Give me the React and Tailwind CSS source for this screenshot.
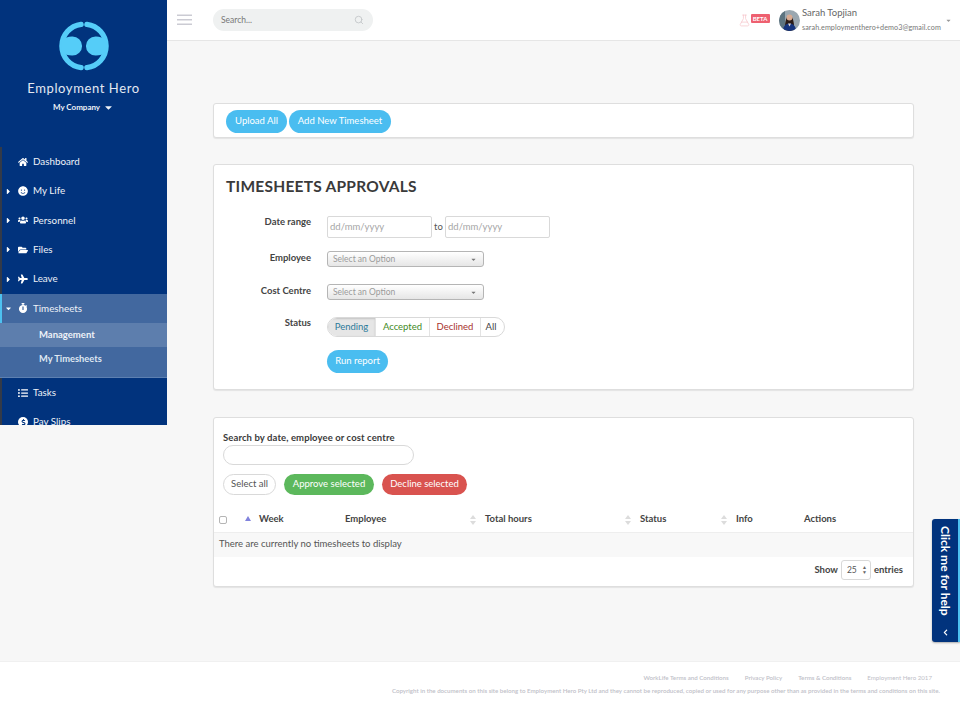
import { FaHome, FaSmile, FaUsers, FaFolderOpen, FaPlane, FaStopwatch, FaListUl, FaDollarSign, FaCaretRight, FaCaretDown, FaChevronLeft } from 'react-icons/fa'
import { Search, FlaskConical } from 'lucide-react'

function PayIcon() {
  return (
    <span className="w-[10px] h-[10px] rounded-full bg-white text-[#01337d] flex items-center justify-center text-[7px]"><FaDollarSign /></span>
  )
}

const NAV_TOP = [
  { label: 'Dashboard', icon: FaHome },
  { label: 'My Life', icon: FaSmile, arrow: true },
  { label: 'Personnel', icon: FaUsers, arrow: true },
  { label: 'Files', icon: FaFolderOpen, arrow: true },
  { label: 'Leave', icon: FaPlane, arrow: true },
]

function NavRow({ label, icon: Icon, arrow }) {
  return (
    <div className="h-[29.4px] flex items-center border-l-2 border-[#333a48] text-white">
      <span className="w-[5px] ml-[3.5px] flex justify-center text-[9px]">
        {arrow && <FaCaretRight />}
      </span>
      <span className="w-[13px] ml-[6px] flex justify-center text-[10px]"><Icon /></span>
      <span className="ml-[3.5px] mb-[1px] text-[9.8px] text-[#eef2f8]">{label}</span>
    </div>
  )
}

function Logo() {
  return (
    <svg width="50" height="50" viewBox="0 0 52 52" fill="none" className="text-[#55cdf8]">
      <path d="M23 3.5C11.5 5 3 14.5 3 26S11.5 47 23 48.5" stroke="currentColor" strokeWidth="5.5" strokeLinecap="round" />
      <path d="M29 3.5C40.5 5 49 14.5 49 26S40.5 47 29 48.5" stroke="currentColor" strokeWidth="5.5" strokeLinecap="round" />
      <path d="M3 20a16 16 0 0 1 11-4a10 10 0 1 1 0 20a16 16 0 0 1 -11-4z" fill="currentColor" />
      <path d="M49 20a16 16 0 0 0 -11-4a10 10 0 1 0 0 20a16 16 0 0 0 11-4z" fill="currentColor" />
    </svg>
  )
}

function Sidebar() {
  return (
    <aside className="w-[167px] h-[425px] shrink-0 bg-[#01337d] overflow-hidden">
      <div className="h-[147px] flex flex-col items-center pt-[21px]">
        <Logo />
        <div className="mt-[9px] text-[13px] leading-[16px] tracking-[0.6px] text-[#e3e9f2]">Employment Hero</div>
        <div className="mt-[5px] flex items-center gap-[3px] text-[8px] leading-[12px] font-bold text-[#eef2f8]">
          My Company <FaCaretDown className="text-[11px]" />
        </div>
      </div>
      {NAV_TOP.map(n => <NavRow key={n.label} {...n} />)}
      <div className="bg-[#42689f] border-b border-[#5d80b1]">
        <div className="h-[29px] flex items-center border-l-2 border-[#4dc1f0] text-white">
          <span className="w-[5px] ml-[3.5px] flex justify-center text-[9px]"><FaCaretDown /></span>
          <span className="w-[13px] ml-[6px] flex justify-center text-[10px]"><FaStopwatch /></span>
          <span className="ml-[3.5px] mb-[1px] text-[9.8px] text-[#eef2f8]">Timesheets</span>
        </div>
        <div className="h-[24px] flex items-center pl-[39px] bg-[#5d7ead] text-[9.5px] font-bold text-[#eef2f8]">Management</div>
        <div className="h-[30px] pt-[3px] pl-[39px] text-[9.3px] leading-[18px] font-bold text-[#dfe7f2]">My Timesheets</div>
      </div>
      <NavRow label="Tasks" icon={FaListUl} />
      <NavRow label="Pay Slips" icon={PayIcon} />
    </aside>
  )
}

function Avatar() {
  return (
    <svg width="21" height="21" viewBox="0 0 21 21" className="rounded-full shrink-0">
      <rect width="21" height="21" fill="#9aa7b0" />
      <rect width="6" height="21" fill="#5d7480" />
      <path d="M6 21c-.5-7 1-16 4.5-16S15.5 14 15 21z" fill="#2b1c18" />
      <circle cx="10.5" cy="7.5" r="3" fill="#d9ab92" />
      <path d="M4 21c0-5 3-7.5 6.5-7.5S17 16 17 21z" fill="#15347e" />
      <path d="M9 13.5h3l-1.5 3z" fill="#e8dcd4" />
    </svg>
  )
}

function TopBar() {
  return (
    <header className="h-[41px] bg-white border-b border-[#e6e6e6] flex items-center pl-[10px]">
      <svg width="16" height="12" viewBox="0 0 16 12" fill="#cbcbd3">
        <rect width="15" height="1.5" y="0.5" />
        <rect width="15" height="1.5" y="5" />
        <rect width="15" height="1.5" y="9.5" />
      </svg>
      <div className="ml-[20px] w-[160px] h-[22px] rounded-full bg-[#eff1f1] flex items-center pl-[8px] pr-[9px] text-[8.5px] text-[#777]">
        <span className="flex-1">Search...</span>
        <Search className="text-[#c0c4c6]" size={10} strokeWidth={2} />
      </div>
      <div className="ml-auto flex items-center">
        <FlaskConical className="text-[#f7c3c9]" size={13} strokeWidth={1.3} />
        <span className="ml-[0px] mb-[3px] w-[19px] h-[9px] rounded-[1px] bg-[#ee6070] text-white text-center text-[6px] leading-[9px] font-bold">BETA</span>
        <span className="ml-[9px] flex"><Avatar /></span>
        <div className="ml-[2.5px] w-[143px]">
          <div className="text-[9.5px] leading-[12px] text-[#666]">Sarah Topjian</div>
          <div className="mt-[3.5px] text-[7.2px] leading-[10px] tracking-[0.08px] text-[#777]">sarah.employmenthero+demo3@gmail.com</div>
        </div>
        <FaCaretDown className="mr-[8px] text-[#999] text-[7px]" />
      </div>
    </header>
  )
}

function Card({ className, children }) {
  return <section className={`bg-white rounded-[3px] border border-[#dedede] shadow-[0_1px_1px_rgba(0,0,0,0.08)] ${className}`}>{children}</section>
}

function Blue({ children, className = '' }) {
  return <button className={`h-[23px] rounded-full bg-[#4abdf0] text-white text-[9.5px] whitespace-nowrap ${className}`}>{children}</button>
}

function Field({ label, labelClass = '', className, children }) {
  return (
    <div className={`flex items-start ${className}`}>
      <div className={`w-[97px] text-right text-[9.5px] leading-[12px] font-bold text-[#444] ${labelClass}`}>{label}</div>
      <div className="ml-[16px] flex items-center">{children}</div>
    </div>
  )
}

function DateBox() {
  return <div className="w-[105px] h-[22px] rounded-[2px] border border-[#d9d9d9] bg-white pl-[2px] flex items-center text-[9.5px] text-[#a6a6a6]">dd/mm/yyyy</div>
}

function Select() {
  return (
    <div className="w-[157px] h-[16px] rounded-[3px] border border-[#b5b5b5] bg-gradient-to-b from-[#ffffff] to-[#e6e6e6] flex items-center pl-[5px] pr-[6px] text-[8.5px] text-[#9b9b9b]">
      <span className="flex-1">Select an Option</span>
      <FaCaretDown className="text-[#777] text-[7px]" />
    </div>
  )
}

function SortIcon() {
  return (
    <svg width="6" height="10" viewBox="0 0 6 10" fill="#dcdcdc">
      <path d="M3 0l3 4H0zM3 10l3-4H0z" />
    </svg>
  )
}

function Th({ width, sort, children }) {
  return (
    <div className={`${width} flex items-center`}>
      <span>{children}</span>
      {sort && <span className="ml-auto mr-[9px] flex"><SortIcon /></span>}
    </div>
  )
}

function Approvals() {
  return (
    <Card className="mt-[26px] h-[226px] pt-[12px]">
      <h1 className="pl-[12px] text-[15.5px] leading-[18px] tracking-[0.25px] font-bold text-[#3a3a3a]">TIMESHEETS APPROVALS</h1>
      <Field label="Date range" className="mt-[21px]">
        <DateBox />
        <span className="mx-[2px] w-[9px] text-center text-[9.5px] text-[#555]">to</span>
        <DateBox />
      </Field>
      <Field label="Employee" labelClass="pt-[1px]" className="mt-[13px]"><Select /></Field>
      <Field label="Cost Centre" labelClass="pt-[1px]" className="mt-[17px]"><Select /></Field>
      <Field label="Status" className="mt-[17px]">
        <div className="h-[20px] flex rounded-full border border-[#d9d9d9] overflow-hidden text-[9.5px] leading-[18px]">
          <span className="w-[47px] text-center bg-[#e6e6e6] shadow-[inset_0_1px_2px_rgba(0,0,0,0.15)] text-[#2d7a9a]">Pending</span>
          <span className="w-[54px] text-center border-l border-[#e3e3e3] text-[#3f8a1f]">Accepted</span>
          <span className="w-[51px] text-center border-l border-[#e3e3e3] text-[#a8322d]">Declined</span>
          <span className="w-[24px] text-center border-l border-[#e3e3e3] pr-[3px] text-[#444]">All</span>
        </div>
      </Field>
      <div className="mt-[13px] ml-[113px] flex"><Blue className="w-[61px]">Run report</Blue></div>
    </Card>
  )
}

function Results() {
  return (
    <Card className="mt-[27px] h-[170px] pt-[14px]">
      <div className="pl-[9px]">
        <div className="text-[9.5px] leading-[12px] tracking-[0.1px] font-bold text-[#3a3a3a]">Search by date, employee or cost centre</div>
        <div className="mt-[1px] w-[191px] h-[20px] rounded-full border border-[#d9d9d9]" />
        <div className="mt-[9px] flex gap-[8px] text-[9.5px]">
          <button className="h-[21px] w-[53px] rounded-full border border-[#d9d9d9] text-[#555]">Select all</button>
          <button className="h-[21px] w-[90px] rounded-full bg-[#5cb85c] text-white">Approve selected</button>
          <button className="h-[21px] w-[85px] rounded-full bg-[#d9534f] text-white">Decline selected</button>
        </div>
      </div>
      <div className="mt-[12px] h-[26px] border-b border-[#eeeeee] flex items-center pl-[5px] text-[9.5px] font-bold text-[#444]">
        <span className="w-[8px] h-[8px] rounded-[2px] border border-[#b5b5b5]" />
        <span className="ml-[18px] w-[14px] flex">
          <svg width="6" height="5" viewBox="0 0 6 5" fill="#8183dd" className="mb-[3px]"><path d="M3 0l3 5H0z" /></svg>
        </span>
        <Th width="w-[86px]">Week</Th>
        <Th width="w-[140px]" sort>Employee</Th>
        <Th width="w-[155px]" sort>Total hours</Th>
        <Th width="w-[96px]" sort>Status</Th>
        <Th width="w-[68px]">Info</Th>
        <Th width="w-[60px]">Actions</Th>
      </div>
      <div className="h-[24px] bg-[#f8f8f8] pl-[5px] pb-[2px] flex items-center text-[9.5px] text-[#555]">There are currently no timesheets to display</div>
      <div className="mt-[3px] pr-[10px] flex justify-end items-center text-[9.5px] font-bold text-[#444]">
        <span>Show</span>
        <span className="mx-[3px] w-[30px] h-[20px] rounded-[3px] border border-[#d9d9d9] pl-[5px] pr-[3px] flex items-center justify-between font-normal text-[8.5px] text-[#555]">
          25
          <span className="text-[5px] leading-[5px] text-[#666]">▲<br />▼</span>
        </span>
        <span>entries</span>
      </div>
    </Card>
  )
}

function HelpTab() {
  return (
    <div className="absolute left-[932px] top-[519px] w-[28px] h-[123px] rounded-l-[3px] bg-[#01337d] border-r-2 border-[#4dc1f0] shadow-[0_1px_2px_rgba(0,0,0,0.3)] flex flex-col items-center text-white">
      <span className="mt-[7px] text-[12px] leading-[14px] font-bold [writing-mode:vertical-rl]">Click me for help</span>
      <FaChevronLeft className="mt-auto mb-[6px] text-[7px]" />
    </div>
  )
}

function Footer() {
  return (
    <footer className="h-[48px] bg-white border-t border-[#f0f0f0] pr-[20px] text-[#c0c0c8] font-semibold">
      <div className="mt-[12px] flex justify-end text-[6.15px] leading-[8px] gap-[16px] pr-[8px]">
        <span>WorkLife Terms and Conditions</span>
        <span>Privacy Policy</span>
        <span>Terms &amp; Conditions</span>
        <span className="font-normal">Employment Hero 2017</span>
      </div>
      <div className="mt-[5px] text-right text-[6.15px] leading-[8px]">
        Copyright in the documents on this site belong to Employment Hero Pty Ltd and they cannot be reproduced, copied or used for any purpose other than as provided in the terms and conditions on this site.
      </div>
    </footer>
  )
}

export default function App() {
  return (
    <div className="relative w-[960px] h-[709px] overflow-hidden bg-[#f7f7f7] flex font-['Lato',sans-serif]">
      <Sidebar />
      <div className="flex-1 flex flex-col min-w-0">
        <TopBar />
        <main className="flex-1 px-[46px] pt-[62px]">
          <Card className="h-[35px] pl-[12px] pt-[6px] flex items-start gap-[2px]">
            <Blue className="w-[61px]">Upload All</Blue>
            <Blue className="w-[102px]">Add New Timesheet</Blue>
          </Card>
          <Approvals />
          <Results />
        </main>
        <div className="ml-[-167px]"><Footer /></div>
      </div>
      <HelpTab />
    </div>
  )
}
